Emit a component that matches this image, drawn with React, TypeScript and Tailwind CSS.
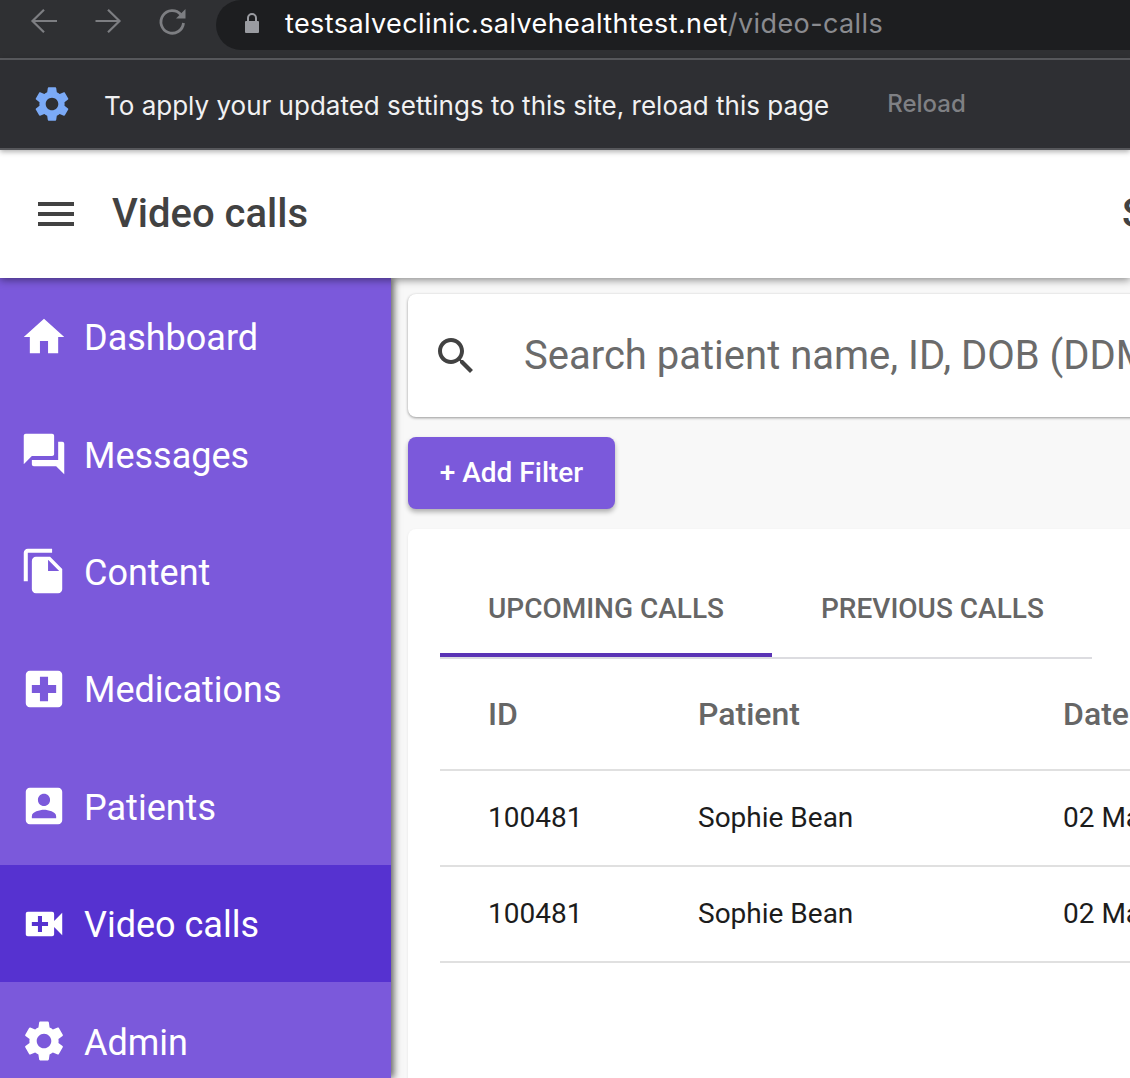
const icons = {
  home: "M10 20v-6h4v6h5v-8h3L12 3 2 12h3v8z",
  forum: "M21 6h-2v9H6v2c0 .55.45 1 1 1h11l4 4V7c0-.55-.45-1-1-1zm-4 6V3c0-.55-.45-1-1-1H3c-.55 0-1 .45-1 1v14l4-4h10c.55 0 1-.45 1-1z",
  copy: "M16 1H4c-1.1 0-2 .9-2 2v14h2V3h12V1zm-1 4l6 6v10c0 1.1-.9 2-2 2H7.99C6.89 23 6 22.1 6 21l.01-14c0-1.1.89-2 1.99-2h7zm-1 7h5.5L14 6.5V12z",
  hospital: "M19 3H5c-1.1 0-1.99.9-1.99 2L3 19c0 1.1.9 2 2 2h14c1.1 0 2-.9 2-2V5c0-1.1-.9-2-2-2zm-1 11h-4v4h-4v-4H6v-4h4V6h4v4h4v4z",
  account: "M3 5v14c0 1.1.89 2 2 2h14c1.1 0 2-.9 2-2V5c0-1.1-.9-2-2-2H5c-1.11 0-2 .9-2 2zm12 4c0 1.66-1.34 3-3 3s-3-1.34-3-3 1.34-3 3-3 3 1.34 3 3zm-9 8c0-2 4-3.1 6-3.1s6 1.1 6 3.1v1H6v-1z",
  video: "M17 10.5V7c0-.55-.45-1-1-1H4c-.55 0-1 .45-1 1v10c0 .55.45 1 1 1h12c.55 0 1-.45 1-1v-3.5l4 4v-11l-4 4zM14 13h-3v3H9v-3H6v-2h3V8h2v3h3v2z",
  settings: "M19.14 12.94c.04-.3.06-.61.06-.94 0-.32-.02-.64-.07-.94l2.03-1.58c.18-.14.23-.41.12-.61l-1.92-3.32c-.12-.22-.37-.29-.59-.22l-2.39.96c-.5-.38-1.03-.7-1.62-.94l-.36-2.54c-.04-.24-.24-.41-.48-.41h-3.84c-.24 0-.43.17-.47.41l-.36 2.54c-.59.24-1.13.57-1.62.94l-2.39-.96c-.22-.08-.47 0-.59.22L2.74 8.87c-.12.21-.08.47.12.61l2.03 1.58c-.05.3-.09.63-.09.94s.02.64.07.94l-2.03 1.58c-.18.14-.23.41-.12.61l1.92 3.32c.12.22.37.29.59.22l2.39-.96c.5.38 1.03.7 1.62.94l.36 2.54c.05.24.24.41.48.41h3.84c.24 0 .44-.17.47-.41l.36-2.54c.59-.24 1.13-.56 1.62-.94l2.39.96c.22.08.47 0 .59-.22l1.92-3.32c.12-.22.07-.47-.12-.61l-2.01-1.58zM12 15.6c-1.98 0-3.6-1.62-3.6-3.6s1.62-3.6 3.6-3.6 3.6 1.62 3.6 3.6-1.62 3.6-3.6 3.6z",
  search: "M15.5 14h-.79l-.28-.27C15.41 12.59 16 11.11 16 9.5 16 5.91 13.09 3 9.5 3S3 5.91 3 9.5 5.91 16 9.5 16c1.61 0 3.09-.59 4.23-1.57l.27.28v.79l5 4.99L20.49 19l-4.99-5zm-6 0C7.01 14 5 11.99 5 9.5S7.01 5 9.5 5 14 7.01 14 9.5 11.99 14 9.5 14z",
  menu: "M3 18h18v-2H3v2zm0-5h18v-2H3v2zm0-7v2h18V6H3z",
};

function Icon({ d, className }: { d: string; className?: string }) {
  return (
    <svg viewBox="0 0 24 24" fill="currentColor" className={className} aria-hidden>
      <path d={d} />
    </svg>
  );
}

const nav = [
  { label: "Dashboard", icon: icons.home },
  { label: "Messages", icon: icons.forum },
  { label: "Content", icon: icons.copy },
  { label: "Medications", icon: icons.hospital },
  { label: "Patients", icon: icons.account },
  { label: "Video calls", icon: icons.video, active: true },
  { label: "Admin", icon: icons.settings },
];

function BrowserBar() {
  return (
    <div className="flex h-[58px] shrink-0 items-start bg-[#2f3033] text-[#7d7e82]">
      <svg viewBox="0 0 32 32" className="ml-[28px] mt-[5px] h-[32px] w-[32px]" fill="none" stroke="currentColor" strokeWidth="2.2">
        <path d="M29 16H4.500M16 4.800L4.500 16 16 27.200" />
      </svg>
      <svg viewBox="0 0 32 32" className="ml-[32px] mt-[5px] h-[32px] w-[32px]" fill="none" stroke="currentColor" strokeWidth="2.2">
        <path d="M3.500 16H27.500M16 4.800L27.500 16 16 27.200" />
      </svg>
      <svg viewBox="0 0 32 32" className="ml-[32px] mt-[5px] h-[32px] w-[32px]" fill="none" stroke="currentColor" strokeWidth="2.8">
        <path d="M24.800 9.500A11.300 11.300 0 1 0 27.500 18" />
        <path d="M29.500 4V13.500H20z" fill="currentColor" stroke="none" />
      </svg>
      <div className="ml-[28px] flex h-[50px] flex-1 items-center rounded-l-[25px] bg-[#1d1e20] pb-[4px] pl-[28px]">
        <svg viewBox="0 0 16 22" className="h-[22px] w-[16px] text-[#9a9ca1]" fill="currentColor">
          <path d="M3 9V6a5 5 0 0 1 10 0v3h1a1 1 0 0 1 1 1v10a1 1 0 0 1-1 1H2a1 1 0 0 1-1-1V10a1 1 0 0 1 1-1zm2 0h6V6a3 3 0 0 0-6 0z" />
        </svg>
        <span className="ml-[25px] whitespace-nowrap font-['Inter',sans-serif] text-[27px] leading-none tracking-[0.4px] text-white">
          testsalveclinic.salvehealthtest.net<span className="text-[#8a8b8f]">/video-calls</span>
        </span>
      </div>
    </div>
  );
}

function InfoBar() {
  return (
    <div className="z-30 flex h-[92px] shrink-0 items-center border-y-2 border-y-[#56575b] bg-[#2e2f33] font-['Inter',sans-serif] shadow-[0_2px_5px_rgba(0,0,0,0.3)]">
      <Icon d={icons.settings} className="ml-[31px] h-[42px] w-[42px] shrink-0 text-[#7baaf7]" />
      <span className="ml-[31px] whitespace-nowrap pt-[2px] text-[26px] text-[#f1f1f2]">
        To apply your updated settings to this site, reload this page
      </span>
      <span className="ml-[58px] text-[24px] font-medium text-[#7f8084]">Reload</span>
    </div>
  );
}

function Sidebar() {
  return (
    <nav className="z-10 w-[391px] shrink-0 bg-[#7b59db] text-white shadow-[3px_0_7px_rgba(0,0,0,0.6)]">
      {nav.map((item) => (
        <div
          key={item.label}
          className={`flex h-[117.400px] items-center pl-[17px] ${item.active ? "bg-[#5632d0]" : ""}`}
        >
          <Icon d={item.icon} className="h-[54px] w-[54px] shrink-0 scale-[0.9]" />
          <span className="ml-[13px] whitespace-nowrap pt-[3px] text-[36px] leading-none">{item.label}</span>
        </div>
      ))}
    </nav>
  );
}

function TableRow({ id, name, date }: { id: string; name: string; date: string }) {
  return (
    <div className="flex h-[96px] items-center border-b-2 border-[#e0e0e0] text-[28px] text-[#1c1c1c]">
      <span className="ml-[48px] w-[210px]">{id}</span>
      <span className="w-[365px] whitespace-nowrap">{name}</span>
      <span className="whitespace-nowrap">{date}</span>
    </div>
  );
}

export default function App() {
  return (
    <div className="flex h-[1078px] w-[1130px] flex-col overflow-hidden bg-[#f8f8f8] font-['Roboto',sans-serif]">
      <BrowserBar />
      <InfoBar />
      <header className="z-20 flex h-[128px] shrink-0 items-center bg-white shadow-[0_2px_8px_rgba(0,0,0,0.45)]">
        <Icon d={icons.menu} className="ml-[26px] h-[60px] w-[60px] shrink-0 scale-[0.8] text-[#424242]" />
        <h1 className="ml-[26px] whitespace-nowrap text-[40px] font-medium leading-none text-[#424242]">Video calls</h1>
        <span className="ml-[814px] text-[40px] font-medium leading-none text-[#424242]">S</span>
      </header>
      <div className="flex min-h-0 flex-1">
        <Sidebar />
        <main className="w-[739px] shrink-0 pl-[17px] pt-[16px]">
          <div className="flex h-[123px] w-[900px] items-center rounded-[8px] bg-white shadow-[0_1px_3px_rgba(0,0,0,0.4)]">
            <Icon d={icons.search} className="ml-[24px] h-[48px] w-[48px] shrink-0 text-[#424242]" />
            <span className="ml-[44px] whitespace-nowrap text-[40px] text-[#6b6b6b]">
              Search patient name, ID, DOB (DDMMYYYY)
            </span>
          </div>
          <button className="mt-[20px] flex h-[72px] w-[207px] items-center justify-center rounded-[8px] bg-[#7b59db] text-[28px] font-medium text-white shadow-[0_3px_5px_rgba(0,0,0,0.3)]">
            + Add Filter
          </button>
          <section className="mt-[20px] h-[600px] w-[900px] rounded-[8px] bg-white pl-[32px] shadow-[0_1px_3px_rgba(0,0,0,0.08)]">
            <div className="flex h-[130px] w-[652px] border-b-2 border-[#dcdce0]">
              <div className="flex h-[128px] w-[332px] items-center justify-center border-b-4 border-[#5a33b5] pt-[36px] text-[28px] font-medium text-[#666666]">
                UPCOMING CALLS
              </div>
              <div className="ml-[49px] flex h-[128px] items-center pt-[32px] text-[28px] font-medium text-[#666666]">
                PREVIOUS CALLS
              </div>
            </div>
            <div className="flex h-[112px] items-center border-b-2 border-[#e0e0e0] text-[32px] font-medium text-[#666666]">
              <span className="ml-[48px] w-[210px]">ID</span>
              <span className="w-[365px]">Patient</span>
              <span>Date</span>
            </div>
            <TableRow id="100481" name="Sophie Bean" date="02 March 2021" />
            <TableRow id="100481" name="Sophie Bean" date="02 March 2021" />
          </section>
        </main>
      </div>
    </div>
  );
}
